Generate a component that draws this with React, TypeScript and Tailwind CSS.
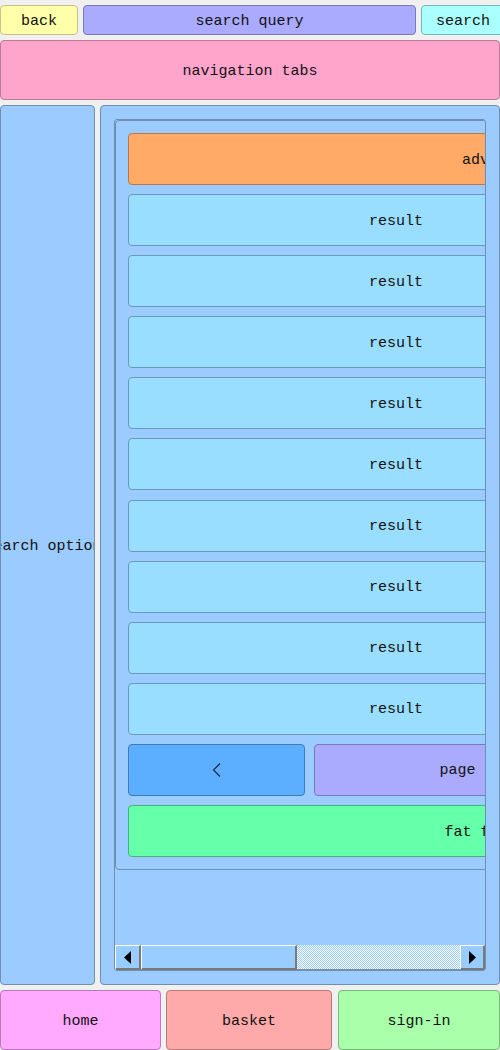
import React from "react";

const btn3d =
  "border-t border-l border-t-white border-l-white border-b-2 border-r-2 border-b-[#7a7a7a] border-r-[#7a7a7a] bg-[#99ccff] shrink-0 flex items-center justify-center";

function Result() {
  return (
    <div className="w-[536px] h-[52px] shrink-0 rounded-[4px] border border-[#6b9ab8] bg-[#99ddff] flex items-center justify-center whitespace-nowrap pt-[2px]">
      result
    </div>
  );
}

export default function App() {
  return (
    <div
      className="w-[500px] h-[1050px] overflow-hidden bg-[#f0f0f0] flex flex-col text-[15px] text-[#111] leading-none"
      style={{ fontFamily: '"Liberation Mono", "DejaVu Sans Mono", monospace' }}
    >
      {/* top row */}
      <div className="flex h-[30px] mt-[5px] shrink-0">
        <div className="w-[78px] shrink-0 rounded-[4px] border border-[#c4c48a] bg-[#ffffaa] flex items-center justify-center pt-[2px]">
          back
        </div>
        <div className="w-[333px] ml-[5px] shrink-0 rounded-[4px] border border-[#7a7ab8] bg-[#aaaaff] flex items-center justify-center pt-[2px]">
          search query
        </div>
        <div className="w-[84px] ml-[5px] shrink-0 rounded-[4px] border border-[#7ab8b8] bg-[#aaffff] flex items-center justify-center pt-[2px]">
          search
        </div>
      </div>

      {/* nav */}
      <div className="mt-[5px] h-[60px] w-[500px] shrink-0 rounded-[4px] border border-[#b87a98] bg-[#ffa5cc] flex items-center justify-center pt-[2px]">
        navigation tabs
      </div>

      {/* main */}
      <div className="mt-[5px] h-[880px] flex shrink-0">
        <div className="w-[95px] shrink-0 rounded-[4px] border border-[#6f8fb0] bg-[#9cccff] overflow-hidden flex items-center justify-center whitespace-nowrap pt-[2px]">
          search options
        </div>
        <div className="w-[400px] ml-[5px] shrink-0 rounded-[4px] border border-[#6f8fb0] bg-[#9cccff] p-[13px]">
          <div className="h-full rounded-[3px] border border-[#6f8fb0] flex flex-col overflow-hidden">
            <div className="flex-1 overflow-hidden">
              <div className="w-[757px] rounded-[4px] border border-[#6f8fb0] p-[12px] flex flex-col gap-[9.1px]">
                <div className="w-[731px] h-[52px] shrink-0 rounded-[4px] border border-[#b8784a] bg-[#ffaa66] flex items-center justify-center whitespace-nowrap pt-[2px]">
                  adverts
                </div>
                <Result />
                <Result />
                <Result />
                <Result />
                <Result />
                <Result />
                <Result />
                <Result />
                <Result />
                <div className="w-[536px] h-[52px] shrink-0 flex gap-[9px]">
                  <div className="w-[177px] shrink-0 rounded-[4px] border border-[#3f7bb8] bg-[#5caeff] flex items-center justify-center">
                    <svg width="9" height="14" viewBox="0 0 9 14">
                      <polyline points="8,0.5 1.5,7 8,13.5" fill="none" stroke="#1b2440" strokeWidth="1.1" />
                    </svg>
                  </div>
                  <div className="flex-1 rounded-[4px] border border-[#7a7ab8] bg-[#aaaaff] flex items-center justify-center whitespace-nowrap pt-[2px]">
                    page 1 of 9
                  </div>
                </div>
                <div className="w-[723px] h-[52px] shrink-0 rounded-[4px] border border-[#48b07a] bg-[#66ffaa] flex items-center justify-center whitespace-nowrap pt-[2px]">
                  fat footer
                </div>
              </div>
            </div>
            {/* scrollbar */}
            <div className="h-[25px] flex shrink-0">
              <div className={`${btn3d} w-[26px]`}>
                <svg width="8" height="13" viewBox="0 0 8 13">
                  <polygon points="7,0 7,13 0,6.5" fill="#000" />
                </svg>
              </div>
              <div className={`${btn3d} w-[156px]`} />
              <div className="flex-1 bg-[image:repeating-conic-gradient(#ffffff_0_25%,#99ccff_0_50%)] bg-[length:2px_2px] border-b border-b-[#7a8fa8]" />
              <div className={`${btn3d} w-[25px]`}>
                <svg width="8" height="13" viewBox="0 0 8 13">
                  <polygon points="1,0 1,13 8,6.5" fill="#000" />
                </svg>
              </div>
            </div>
          </div>
        </div>
      </div>

      {/* bottom */}
      <div className="mt-[5px] h-[60px] flex shrink-0">
        <div className="w-[161px] shrink-0 rounded-[4px] border border-[#b87ab8] bg-[#ffaaff] flex items-center justify-center pt-[2px]">
          home
        </div>
        <div className="w-[166px] ml-[5px] shrink-0 rounded-[4px] border border-[#b87a7a] bg-[#ffaaaa] flex items-center justify-center pt-[2px]">
          basket
        </div>
        <div className="w-[162px] ml-[6px] shrink-0 rounded-[4px] border border-[#7ab87a] bg-[#aaffaa] flex items-center justify-center pt-[2px]">
          sign-in
        </div>
      </div>
    </div>
  );
}
